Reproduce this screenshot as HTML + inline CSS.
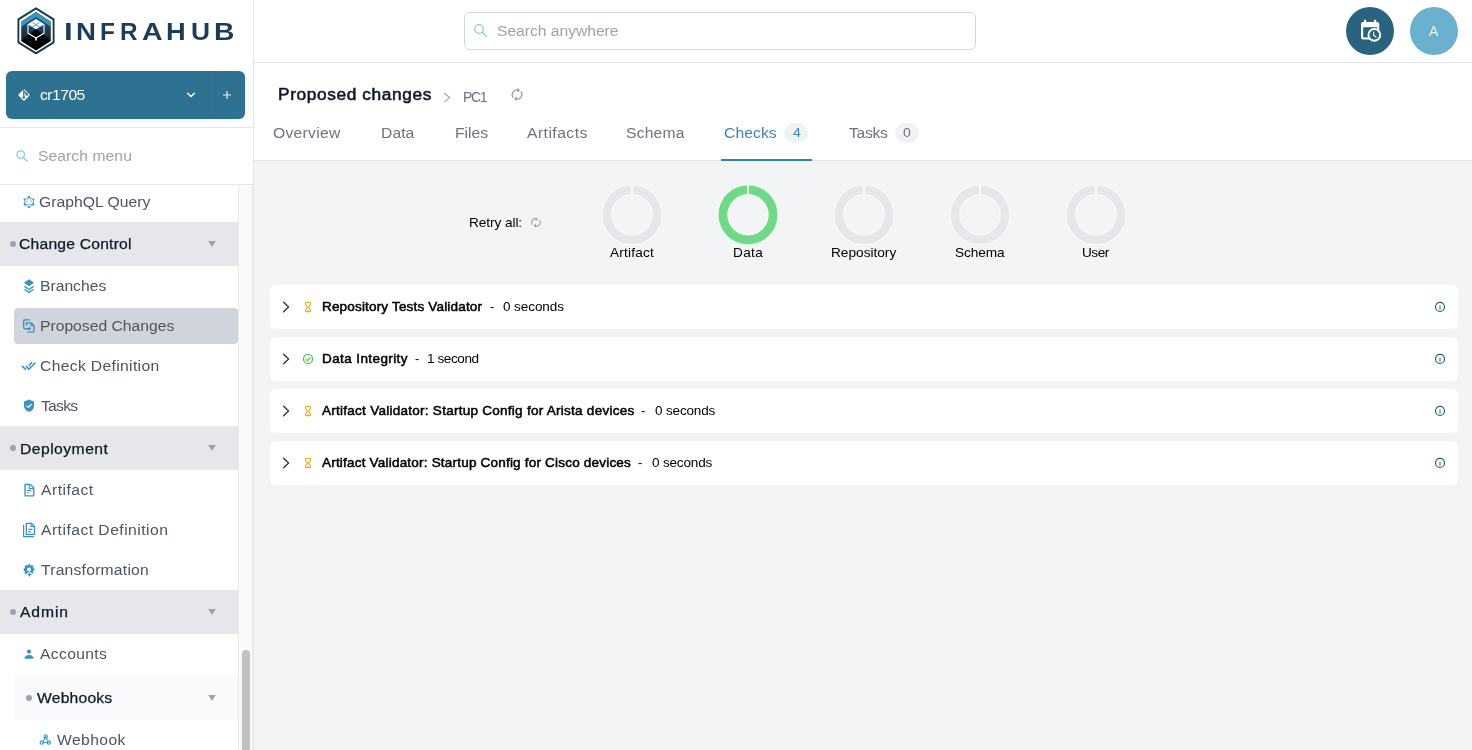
<!DOCTYPE html>
<html><head><meta charset="utf-8">
<style>
*{box-sizing:border-box;margin:0;padding:0}
html,body{width:1472px;height:750px;overflow:hidden;background:#f3f4f6;font-family:"Liberation Sans",sans-serif;}
.a{position:absolute}
.t{position:absolute;white-space:nowrap;line-height:1;will-change:transform}
svg{position:absolute;overflow:visible}
</style></head>
<body>
<!-- header bar -->
<div class="a" style="left:0;top:0;width:1472px;height:63px;background:#fff;border-bottom:1px solid #e5e7eb"></div>
<!-- main header (title + tabs) -->
<div class="a" style="left:254px;top:63px;width:1218px;height:98px;background:#fff;border-bottom:1px solid #e5e7eb"></div>
<!-- sidebar -->
<div class="a" style="left:0;top:0;width:254px;height:750px;background:#fff;border-right:1px solid #e5e7eb"></div>
<div class="a" style="left:0;top:127px;width:253px;height:1px;background:#e5e7eb"></div>
<div class="a" style="left:0;top:184px;width:253px;height:1px;background:#e5e7eb"></div>

<!-- logo -->
<svg style="left:0;top:0" width="60" height="60" viewBox="0 0 60 60">
  <defs>
    <linearGradient id="lg" x1="0" y1="0" x2="0" y2="1">
      <stop offset="0" stop-color="#28628a"/><stop offset="1" stop-color="#0a1520"/></linearGradient>
    <clipPath id="hx"><polygon points="36,12 50.5,21.4 50.5,41.2 36,50.4 21.5,41.2 21.5,21.4"/></clipPath>
  </defs>
  <polygon points="36,8.4 53.6,19.4 53.6,42.4 36,53.4 18.4,42.4 18.4,19.4" fill="#fff" stroke="#1b394e" stroke-width="1.9" stroke-linejoin="round"/>
  <g clip-path="url(#hx)">
    <rect x="18" y="8" width="36" height="46" fill="#000"/>
    <polygon points="18,29 36,17 54,29 54,43.6 36,29 18,43.6" fill="url(#lg)"/>
    <polygon points="18,19 36,7 54,19 54,29 36,17 18,29" fill="#3b95c1"/>
  </g>
  <polygon points="36,19.8 44,24.6 36,29.2 28,24.6" fill="#fff"/>
  <path d="M32,22.2 L40,27 M40,22.2 L32,27" stroke="#3a86ad" stroke-width="0.8"/>
  <polygon points="36,19.8 44,24.6 44,33.2 36,38 28,33.2 28,24.6" fill="none" stroke="#fff" stroke-width="1.1" stroke-linejoin="round"/>
  <path d="M36,37.8 L36,40.6" stroke="#fff" stroke-width="1.6"/>
</svg>

<!-- branch button -->
<div class="a" style="left:6px;top:71px;width:239px;height:48px;background:#2e7292;border-radius:6px;box-shadow:0 1px 2px rgba(0,0,0,0.06)"></div>
<div class="a" style="left:208px;top:71px;width:1px;height:48px;background:#2c6e8d"></div>
<svg style="left:0;top:0" width="40" height="120" viewBox="0 0 40 120">
  <rect x="19.7" y="90.7" width="8.6" height="8.6" rx="1.2" fill="#fff" transform="rotate(45 24 95)"/>
  <path d="M22.6,89.6 L26.6,93.8" stroke="#2e7292" stroke-width="1.3"/>
  <path d="M23.8,91.4 L23.8,97.2" stroke="#2e7292" stroke-width="1.3"/>
  <circle cx="26.8" cy="94.4" r="1.3" fill="#2e7292"/>
  <circle cx="23.8" cy="97.6" r="1.3" fill="#2e7292"/>
</svg>
<svg style="left:0;top:0" width="240" height="120" viewBox="0 0 240 120">
  <path d="M187.6,93.2 L191,96.6 L194.4,93.2" fill="none" stroke="#fff" stroke-width="1.4" stroke-linecap="round" stroke-linejoin="round"/>
  <path d="M227,91 L227,99 M223,95 L231,95" fill="none" stroke="#e8eef2" stroke-width="1.2"/>
</svg>

<!-- sidebar search icon -->
<svg style="left:0;top:0" width="40" height="170" viewBox="0 0 40 170">
  <circle cx="20.7" cy="154.6" r="3.8" fill="none" stroke="#8dcbe0" stroke-width="1.3"/>
  <path d="M23.5,157.4 L27,161" stroke="#8dcbe0" stroke-width="1.4" stroke-linecap="round"/>
</svg>

<!-- search anywhere box -->
<div class="a" style="left:464px;top:12px;width:512px;height:38px;border:1px solid #d1d5db;border-radius:6px;background:#fff"></div>
<svg style="left:0;top:0" width="500" height="60" viewBox="0 0 500 60">
  <circle cx="479" cy="29" r="4.3" fill="none" stroke="#8dcbe0" stroke-width="1.3"/>
  <path d="M482.2,32.2 L486.6,36.6" stroke="#8dcbe0" stroke-width="1.4" stroke-linecap="round"/>
</svg>

<!-- avatars -->
<div class="a" style="left:1346px;top:7px;width:48px;height:48px;border-radius:50%;background:#29637f"></div>
<div class="a" style="left:1410px;top:7px;width:48px;height:48px;border-radius:50%;background:#6ab1ce"></div>
<svg style="left:0;top:0" width="1472" height="60" viewBox="0 0 1472 60">
  <rect x="1361" y="22" width="18.2" height="17.5" rx="2.2" fill="#fff"/>
  <rect x="1363.2" y="27.2" width="13.8" height="10.2" fill="#29637f"/>
  <rect x="1364" y="19.8" width="2.2" height="3" fill="#fff"/>
  <rect x="1374" y="19.8" width="2.2" height="3" fill="#fff"/>
  <circle cx="1374.3" cy="34.9" r="6.8" fill="#fff"/>
  <circle cx="1374.3" cy="34.9" r="4.9" fill="#29637f"/>
  <path d="M1373.6,31.8 L1373.6,35.2 L1376.4,37.4" fill="none" stroke="#fff" stroke-width="1.2"/>
</svg>

<!-- breadcrumb chevron + refresh -->
<svg style="left:0;top:0" width="600" height="120" viewBox="0 0 600 120">
  <path d="M444.3,93.3 L449.6,97.6 L444.3,101.9" fill="none" stroke="#9ca3af" stroke-width="1.1"/>
  <g fill="none" stroke="#9ca3af" stroke-width="1.3">
    <path d="M513.3,97.5 A4.6,4.6 0 0 1 518.5,90.3"/>
    <path d="M520.9,91.5 A4.6,4.6 0 0 1 515.7,98.7"/>
  </g>
  <path d="M517.3,88 L520.3,90.4 L517.3,92.6 Z" fill="#9ca3af"/>
  <path d="M516.9,96.4 L513.9,98.6 L516.9,101 Z" fill="#9ca3af"/>
</svg>

<!-- tabs badges/underline -->
<div class="a" style="left:784px;top:123px;width:24px;height:20px;border-radius:10px;background:#f1f2f4"></div>
<div class="a" style="left:895px;top:123px;width:24px;height:20px;border-radius:10px;background:#f1f2f4"></div>
<div class="a" style="left:721px;top:159px;width:91px;height:2px;background:#2f85ad"></div>

<!-- sidebar groups -->
<div class="a" style="left:0;top:222px;width:238px;height:44px;background:#e5e7eb"></div>
<div class="a" style="left:14px;top:308px;width:224px;height:36px;border-radius:4px;background:#d1d5db"></div>
<div class="a" style="left:0;top:426px;width:238px;height:44px;background:#e5e7eb"></div>
<div class="a" style="left:0;top:590px;width:238px;height:44px;background:#e5e7eb"></div>
<div class="a" style="left:14px;top:676px;width:224px;height:44px;background:#f9fafb"></div>
<svg style="left:0;top:0" width="240" height="750" viewBox="0 0 240 750">
  <g fill="#9ca3af">
    <circle cx="13" cy="244" r="3"/><circle cx="13" cy="448" r="3"/><circle cx="13" cy="612" r="3"/><circle cx="29" cy="698" r="3"/>
    <path d="M208.2,241 L215.8,241 L212,247 Z"/><path d="M208.2,445 L215.8,445 L212,451 Z"/>
    <path d="M208.2,609 L215.8,609 L212,615 Z"/><path d="M208.2,695 L215.8,695 L212,701 Z"/>
  </g>
  <g fill="none" stroke="#3993c0" stroke-width="1.2">
    <!-- graphql -->
    <polygon points="29,197 33.4,199.6 33.4,204.6 29,207.2 24.6,204.6 24.6,199.6" stroke-width="0.7"/>
    <polygon points="29,197 33.4,204.6 24.6,204.6" stroke-width="0.6"/>
  </g>
  <g fill="#3993c0">
    <circle cx="29" cy="197" r="1"/><circle cx="33.4" cy="199.6" r="1"/><circle cx="33.4" cy="204.6" r="1"/>
    <circle cx="29" cy="207.2" r="1"/><circle cx="24.6" cy="204.6" r="1"/><circle cx="24.6" cy="199.6" r="1"/>
    <!-- branches layers -->
    <path d="M29,279.3 L34,282.8 L29,286.3 L24,282.8 Z"/>
  </g>
  <g fill="none" stroke="#3993c0" stroke-width="1.3" stroke-linejoin="round">
    <path d="M24.4,286.4 L29,289.5 L33.6,286.4"/>
    <path d="M24.4,289.3 L29,292.4 L33.6,289.3"/>
    <!-- proposed changes -->
    <path d="M29.8,319.9 L24.8,319.9 Q23.7,319.9 23.7,321 L23.7,327.6 Q23.7,328.7 24.8,328.7 L29.6,328.7" stroke-width="1.35"/>
    <path d="M26.5,325.6 L26.5,322.8 L31.2,322.8 L33.9,325.5 L33.9,331 Q33.9,332.1 32.8,332.1 L27.4,332.1" stroke-width="1.35"/>
    <path d="M31,322.9 L31,325.6 L33.8,325.6" stroke-width="1.2"/>
    <path d="M28.9,327.2 L31,328.7 L28.9,330.2 Z" fill="#3993c0" stroke-width="0.6"/>
    <!-- check definition -->
    <path d="M22.5,366.4 L25.6,369.4" stroke-width="1.6" stroke-linecap="round"/>
    <path d="M26.4,366.4 L28.8,369.2 L35,363" stroke-width="1.6" stroke-linecap="round"/>
    <path d="M29,365.5 L31.6,362.8" stroke-width="1.5" stroke-linecap="round"/>
    <!-- artifact -->
    <path d="M25,484.4 L30.3,484.4 L33.8,488 L33.8,495.8 L25,495.8 Z" stroke-width="1.3"/>
    <path d="M29.2,484.4 L29.2,488.6 L33.6,488.6" stroke-width="1.1"/>
    <path d="M27.2,490.5 L31,490.5 M27.2,492.7 L29,492.7" stroke-width="1.1"/>
    <!-- artifact def -->
    <path d="M26.3,523.3 L31.3,523.3 L34.5,526.5 L34.5,534.4 L26.3,534.4 Z" stroke-width="1.3"/>
    <path d="M31,523.5 L31,526.5 L34.4,526.5" stroke-width="1.1"/>
    <path d="M23.6,524.8 L23.6,536.6 L33.9,536.6" stroke-width="1.2"/>
    <path d="M28.2,529.4 L32.4,529.4 M28.2,531.6 L31,531.6" stroke-width="1.1"/>
    <!-- webhook -->
    <circle cx="45.7" cy="736.4" r="1.7" stroke-width="1.1"/>
    <circle cx="41.8" cy="742.6" r="1.7" stroke-width="1.1"/>
    <circle cx="48.8" cy="742.6" r="1.7" stroke-width="1.1"/>
    <path d="M45.7,736.4 L43.6,741 M45.7,736.4 L47.6,740.4 M42,742.6 L48.8,742.6" stroke-width="1"/>
  </g>
  <g fill="#3993c0">
    <!-- tasks shield -->
    <path d="M29,399.6 L34,401.6 L34,405.8 C34,408.9 31.6,411.2 29,412 C26.4,411.2 24,408.9 24,405.8 L24,401.6 Z"/>
    <!-- cog -->
    <g transform="translate(29,569.6) scale(0.88) translate(-29,-570.3)"><path d="M27.7,564.3 L30.3,564.3 L30.8,566 L32.4,565.1 L34.3,566.9 L33.3,568.5 L35,569 L35,571.6 L33.3,572.1 L34.2,573.7 L32.4,575.5 L30.8,574.6 L30.3,576.3 L27.7,576.3 L27.2,574.6 L25.6,575.5 L23.8,573.7 L24.7,572.1 L23,571.6 L23,569 L24.7,568.5 L23.8,566.9 L25.6,565.1 L27.2,566 Z"/></g>
    <!-- accounts -->
    <circle cx="29" cy="651.6" r="2.1"/>
    <path d="M24.5,658.8 C24.5,656.4 26.2,655 29,655 C31.8,655 33.5,656.4 33.5,658.8 Z"/>
  </g>
  <path d="M26.6,405.7 L28.4,407.4 L31.6,404.2" fill="none" stroke="#fff" stroke-width="1.2"/>
  <circle cx="29" cy="569.6" r="2" fill="#fff"/>
  <circle cx="29.6" cy="574.6" r="2.6" fill="#fff"/>
  <path d="M29.6,572.8 L29.6,576.4 M27.8,574.6 L31.4,574.6" stroke="#3993c0" stroke-width="1.2"/>
</svg>

<!-- scrollbar -->
<div class="a" style="left:238px;top:185px;width:15px;height:565px;background:#fafafa;border-left:1px solid #e8e8e8;border-right:1px solid #ececec"></div>
<div class="a" style="left:242px;top:650px;width:8px;height:110px;border-radius:4px;background:#c1c1c1"></div>

<!-- retry icon -->
<svg style="left:0;top:0" width="600" height="260" viewBox="0 0 600 260">
  <g fill="none" stroke="#9ca3af" stroke-width="1.1">
    <path d="M532.6,224.7 A3.6,3.6 0 0 1 536.4,218.9"/>
    <path d="M539.3,220.1 A3.6,3.6 0 0 1 535.5,225.9"/>
  </g>
  <path d="M535.7,217.3 L538.2,219.3 L535.7,221.1 Z" fill="#9ca3af"/>
  <path d="M536,223.8 L533.5,225.7 L536,227.6 Z" fill="#9ca3af"/>
</svg>

<!-- donuts -->
<svg style="left:0;top:0" width="1472" height="300" viewBox="0 0 1472 300">
  <g fill="none" stroke-width="9.6">
    <circle cx="632" cy="214.8" r="25.1" stroke="#e5e7eb"/>
    <circle cx="748" cy="214.8" r="25.1" stroke="#70d987"/>
    <circle cx="864" cy="214.8" r="25.1" stroke="#e5e7eb"/>
    <circle cx="980" cy="214.8" r="25.1" stroke="#e5e7eb"/>
    <circle cx="1096" cy="214.8" r="25.1" stroke="#e5e7eb"/>
  </g>
  <g fill="none" stroke="#fff" stroke-width="0.8" opacity="0.9">
    <circle cx="632" cy="214.8" r="29.9"/><circle cx="632" cy="214.8" r="20.3"/>
    <circle cx="748" cy="214.8" r="29.9"/><circle cx="748" cy="214.8" r="20.3"/>
    <circle cx="864" cy="214.8" r="29.9"/><circle cx="864" cy="214.8" r="20.3"/>
    <circle cx="980" cy="214.8" r="29.9"/><circle cx="980" cy="214.8" r="20.3"/>
    <circle cx="1096" cy="214.8" r="29.9"/><circle cx="1096" cy="214.8" r="20.3"/>
  </g>
  <g stroke="#fff" stroke-width="1.6">
    <path d="M632,184.8 L632,194.6"/><path d="M748,184.8 L748,194.6"/><path d="M864,184.8 L864,194.6"/><path d="M980,184.8 L980,194.6"/><path d="M1096,184.8 L1096,194.6"/>
  </g>
</svg>

<!-- cards -->
<div class="a" style="left:270px;top:285px;width:1188px;height:44px;border-radius:6px;background:#fff"></div>
<div class="a" style="left:270px;top:337px;width:1188px;height:44px;border-radius:6px;background:#fff"></div>
<div class="a" style="left:270px;top:389px;width:1188px;height:44px;border-radius:6px;background:#fff"></div>
<div class="a" style="left:270px;top:441px;width:1188px;height:44px;border-radius:6px;background:#fff"></div>
<svg style="left:0;top:0" width="1472" height="500" viewBox="0 0 1472 500">
  <g fill="none" stroke="#333333" stroke-width="1.3" stroke-linecap="round" stroke-linejoin="round">
    <path d="M283.6,302.2 L288.6,307 L283.6,311.8"/>
    <path d="M283.6,354.2 L288.6,359 L283.6,363.8"/>
    <path d="M283.6,406.2 L288.6,411 L283.6,415.8"/>
    <path d="M283.6,458.2 L288.6,463 L283.6,467.8"/>
  </g>
  <g fill="none" stroke="#e3b024" stroke-width="1.1" stroke-linejoin="round">
    <path d="M305.6,302.5 L310.4,302.5 L310.4,304.6 L308.6,306.8 L308.6,307.4 L310.4,309.6 L310.4,311.6 L305.6,311.6 L305.6,309.6 L307.4,307.4 L307.4,306.8 L305.6,304.6 Z"/>
    <path d="M305.6,406.5 L310.4,406.5 L310.4,408.6 L308.6,410.8 L308.6,411.4 L310.4,413.6 L310.4,415.6 L305.6,415.6 L305.6,413.6 L307.4,411.4 L307.4,410.8 L305.6,408.6 Z"/>
    <path d="M305.6,458.5 L310.4,458.5 L310.4,460.6 L308.6,462.8 L308.6,463.4 L310.4,465.6 L310.4,467.6 L305.6,467.6 L305.6,465.6 L307.4,463.4 L307.4,462.8 L305.6,460.6 Z"/>
  </g>
  <g stroke="#e3b024" stroke-width="1"><path d="M307.2,310 L308.8,310"/><path d="M307.2,414 L308.8,414"/><path d="M307.2,466 L308.8,466"/></g>
  <circle cx="308" cy="358.9" r="4.5" fill="none" stroke="#4cc35e" stroke-width="1.25"/>
  <path d="M305.7,359.1 L307.4,360.7 L310.4,357.5" fill="none" stroke="#4cc35e" stroke-width="1.2"/>
  <g fill="none" stroke="#225e7b" stroke-width="1.15">
    <circle cx="1440" cy="306.9" r="4.5"/><circle cx="1440" cy="358.9" r="4.5"/><circle cx="1440" cy="410.9" r="4.5"/><circle cx="1440" cy="462.9" r="4.5"/>
  </g>
  <g stroke="#225e7b" stroke-width="1">
    <path d="M1440,305.6 L1440,309.6"/><path d="M1440,357.6 L1440,361.6"/><path d="M1440,409.6 L1440,413.6"/><path d="M1440,461.6 L1440,465.6"/>
  </g>
</svg>
<div class="t" style="left:63.9px;top:20.0px;font-size:24px;color:#1c3d58;font-weight:bold;transform-origin:0 0;transform:scaleX(1.3);">I</div>
<div class="t" style="left:76.1px;top:20.0px;font-size:24px;color:#1c3d58;font-weight:bold;transform-origin:0 0;transform:scaleX(1.15);">N</div>
<div class="t" style="left:100.2px;top:20.0px;font-size:24px;color:#1c3d58;font-weight:bold;transform-origin:0 0;transform:scaleX(1.017);">F</div>
<div class="t" style="left:120.4px;top:20.0px;font-size:24px;color:#1c3d58;font-weight:bold;transform-origin:0 0;transform:scaleX(1.013);">R</div>
<div class="t" style="left:141.5px;top:20.0px;font-size:24px;color:#1c3d58;font-weight:bold;transform-origin:0 0;transform:scaleX(1.188);">A</div>
<div class="t" style="left:166.2px;top:20.0px;font-size:24px;color:#1c3d58;font-weight:bold;transform-origin:0 0;transform:scaleX(1.136);">H</div>
<div class="t" style="left:190.5px;top:20.0px;font-size:24px;color:#1c3d58;font-weight:bold;transform-origin:0 0;transform:scaleX(1.1);">U</div>
<div class="t" style="left:213.9px;top:20.0px;font-size:24px;color:#1c3d58;font-weight:bold;transform-origin:0 0;transform:scaleX(1.179);">B</div>
<div class="t" style="left:40.4px;top:87.8px;font-size:14px;color:#ffffff;letter-spacing:-0.464px;transform-origin:0 0;transform:scaleX(1.12);">cr1705</div>
<div class="t" style="left:37.6px;top:148.6px;font-size:14px;color:#9ca3af;letter-spacing:0.054px;transform-origin:0 0;transform:scaleX(1.12);">Search menu</div>
<div class="t" style="left:496.5px;top:24.2px;font-size:14px;color:#9ca3af;letter-spacing:-0.032px;transform-origin:0 0;transform:scaleX(1.12);">Search anywhere</div>
<div class="t" style="left:1429.0px;top:24.2px;font-size:14px;color:rgba(255,255,255,0.85);">A</div>
<div class="t" style="left:277.8px;top:86.8px;font-size:16px;color:#111827;letter-spacing:0.574px;transform-origin:0 0;transform:scaleX(1.08);-webkit-text-stroke:0.55px #111827;">Proposed changes</div>
<div class="t" style="left:463.0px;top:90.0px;font-size:14px;color:#6b7280;letter-spacing:-1.4px;">PC1</div>
<div class="t" style="left:273.1px;top:126.1px;font-size:14px;color:#6b7280;letter-spacing:0.255px;transform-origin:0 0;transform:scaleX(1.12);">Overview</div>
<div class="t" style="left:380.6px;top:126.1px;font-size:14px;color:#6b7280;letter-spacing:0.059px;transform-origin:0 0;transform:scaleX(1.12);">Data</div>
<div class="t" style="left:454.5px;top:126.1px;font-size:14px;color:#6b7280;letter-spacing:-0.022px;transform-origin:0 0;transform:scaleX(1.12);">Files</div>
<div class="t" style="left:527.1px;top:126.1px;font-size:14px;color:#6b7280;letter-spacing:0.413px;transform-origin:0 0;transform:scaleX(1.12);">Artifacts</div>
<div class="t" style="left:626.0px;top:126.1px;font-size:14px;color:#6b7280;letter-spacing:0.162px;transform-origin:0 0;transform:scaleX(1.12);">Schema</div>
<div class="t" style="left:724.3px;top:126.1px;font-size:14px;color:#3b86ae;letter-spacing:0.071px;transform-origin:0 0;transform:scaleX(1.12);">Checks</div>
<div class="t" style="left:792.8px;top:127.0px;font-size:12.5px;color:#3b86ae;transform-origin:0 0;transform:scaleX(1.12);">4</div>
<div class="t" style="left:848.8px;top:126.1px;font-size:14px;color:#6b7280;letter-spacing:-0.29px;transform-origin:0 0;transform:scaleX(1.12);">Tasks</div>
<div class="t" style="left:903.2px;top:127.0px;font-size:12.5px;color:#6b7280;transform-origin:0 0;transform:scaleX(1.12);">0</div>
<div class="t" style="left:39.4px;top:194.8px;font-size:14px;color:#4b5563;letter-spacing:0.021px;transform-origin:0 0;transform:scaleX(1.12);">GraphQL Query</div>
<div class="t" style="left:19.4px;top:236.7px;font-size:14px;color:#111827;letter-spacing:0.185px;transform-origin:0 0;transform:scaleX(1.12);-webkit-text-stroke:0.25px #111827;">Change Control</div>
<div class="t" style="left:40.0px;top:279.0px;font-size:14px;color:#4b5563;transform-origin:0 0;transform:scaleX(1.12);">Branches</div>
<div class="t" style="left:40.0px;top:319.0px;font-size:14px;color:#4b5563;transform-origin:0 0;transform:scaleX(1.12);">Proposed Changes</div>
<div class="t" style="left:40.0px;top:359.0px;font-size:14px;color:#4b5563;letter-spacing:0.298px;transform-origin:0 0;transform:scaleX(1.12);">Check Definition</div>
<div class="t" style="left:41.0px;top:399.0px;font-size:14px;color:#4b5563;letter-spacing:-0.67px;transform-origin:0 0;transform:scaleX(1.12);">Tasks</div>
<div class="t" style="left:19.7px;top:441.5px;font-size:14px;color:#111827;letter-spacing:0.417px;transform-origin:0 0;transform:scaleX(1.12);-webkit-text-stroke:0.25px #111827;">Deployment</div>
<div class="t" style="left:40.5px;top:483.0px;font-size:14px;color:#4b5563;letter-spacing:0.433px;transform-origin:0 0;transform:scaleX(1.12);">Artifact</div>
<div class="t" style="left:40.5px;top:523.0px;font-size:14px;color:#4b5563;letter-spacing:0.417px;transform-origin:0 0;transform:scaleX(1.12);">Artifact Definition</div>
<div class="t" style="left:40.5px;top:563.0px;font-size:14px;color:#4b5563;letter-spacing:0.2px;transform-origin:0 0;transform:scaleX(1.12);">Transformation</div>
<div class="t" style="left:20.2px;top:604.7px;font-size:14px;color:#111827;letter-spacing:0.804px;transform-origin:0 0;transform:scaleX(1.12);-webkit-text-stroke:0.25px #111827;">Admin</div>
<div class="t" style="left:40.3px;top:647.0px;font-size:14px;color:#4b5563;letter-spacing:0.294px;transform-origin:0 0;transform:scaleX(1.12);">Accounts</div>
<div class="t" style="left:36.8px;top:690.9px;font-size:14px;color:#111827;letter-spacing:0.178px;transform-origin:0 0;transform:scaleX(1.12);-webkit-text-stroke:0.25px #111827;">Webhooks</div>
<div class="t" style="left:56.8px;top:732.8px;font-size:14px;color:#4b5563;letter-spacing:0.357px;transform-origin:0 0;transform:scaleX(1.12);">Webhook</div>
<div class="t" style="left:469.2px;top:216.3px;font-size:13px;color:#000000;letter-spacing:-0.073px;transform-origin:0 0;transform:scaleX(1.05);">Retry all:</div>
<div class="t" style="left:609.9px;top:246.2px;font-size:13px;color:#000000;letter-spacing:0.191px;transform-origin:0 0;transform:scaleX(1.05);">Artifact</div>
<div class="t" style="left:733.2px;top:246.2px;font-size:13px;color:#000000;letter-spacing:0.285px;transform-origin:0 0;transform:scaleX(1.05);">Data</div>
<div class="t" style="left:831.0px;top:246.2px;font-size:13px;color:#000000;transform-origin:0 0;transform:scaleX(1.05);">Repository</div>
<div class="t" style="left:954.7px;top:246.2px;font-size:13px;color:#000000;letter-spacing:-0.114px;transform-origin:0 0;transform:scaleX(1.05);">Schema</div>
<div class="t" style="left:1081.9px;top:246.2px;font-size:13px;color:#000000;letter-spacing:-0.476px;transform-origin:0 0;transform:scaleX(1.05);">User</div>
<div class="t" style="left:321.5px;top:300.1px;font-size:13px;color:#000000;letter-spacing:0.161px;transform-origin:0 0;transform:scaleX(1.04);-webkit-text-stroke:0.5px #000;">Repository Tests Validator</div>
<div class="t" style="left:489.7px;top:300.1px;font-size:13px;color:#000000;">-</div>
<div class="t" style="left:503.0px;top:300.1px;font-size:13px;color:#000000;letter-spacing:-0.084px;transform-origin:0 0;transform:scaleX(1.04);">0 seconds</div>
<div class="t" style="left:321.5px;top:351.9px;font-size:13px;color:#000000;letter-spacing:0.378px;transform-origin:0 0;transform:scaleX(1.04);-webkit-text-stroke:0.5px #000;">Data Integrity</div>
<div class="t" style="left:415.4px;top:351.9px;font-size:13px;color:#000000;">-</div>
<div class="t" style="left:427.3px;top:351.9px;font-size:13px;color:#000000;letter-spacing:-0.384px;transform-origin:0 0;transform:scaleX(1.04);">1 second</div>
<div class="t" style="left:322.0px;top:403.8px;font-size:13px;color:#000000;letter-spacing:0.248px;transform-origin:0 0;transform:scaleX(1.04);-webkit-text-stroke:0.5px #000;">Artifact Validator: Startup Config for Arista devices</div>
<div class="t" style="left:640.8px;top:403.8px;font-size:13px;color:#000000;">-</div>
<div class="t" style="left:654.7px;top:403.8px;font-size:13px;color:#000000;letter-spacing:-0.156px;transform-origin:0 0;transform:scaleX(1.04);">0 seconds</div>
<div class="t" style="left:322.0px;top:455.5px;font-size:13px;color:#000000;letter-spacing:0.189px;transform-origin:0 0;transform:scaleX(1.04);-webkit-text-stroke:0.5px #000;">Artifact Validator: Startup Config for Cisco devices</div>
<div class="t" style="left:637.7px;top:455.5px;font-size:13px;color:#000000;">-</div>
<div class="t" style="left:651.5px;top:455.5px;font-size:13px;color:#000000;letter-spacing:-0.168px;transform-origin:0 0;transform:scaleX(1.04);">0 seconds</div>
</body></html>
